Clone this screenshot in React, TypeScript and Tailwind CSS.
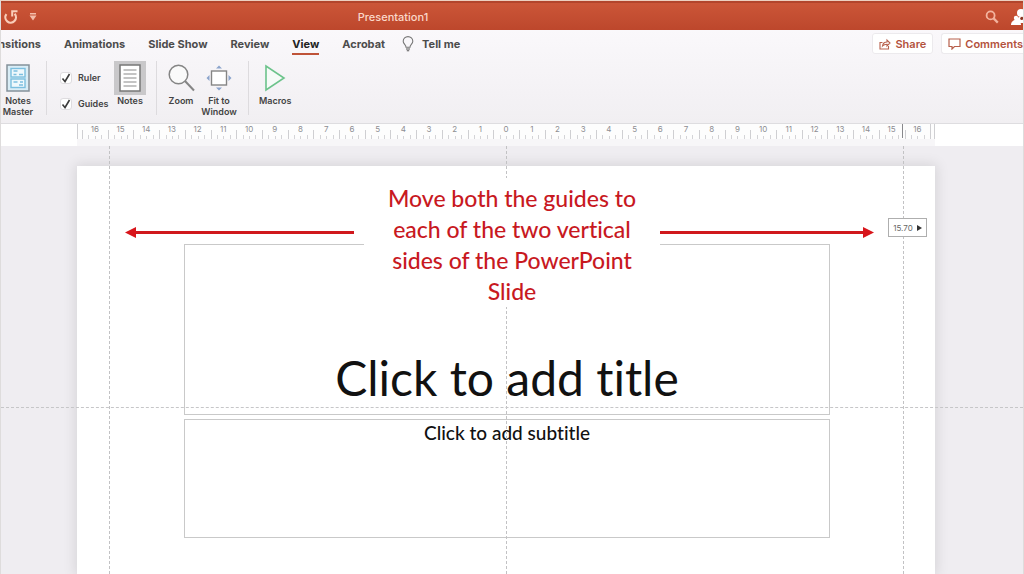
import type { ReactNode } from "react";
import clsx from "clsx";

const tabs = ["Animations", "Slide Show", "Review", "View", "Acrobat"];
const rulerMarks = Array.from({ length: 33 }, (_, i) => Math.abs(i - 16));

const UndoIcon = () => (
  <svg width="16" height="16" viewBox="0 0 16 16" fill="none" stroke="#f9cdb9" strokeWidth="2.2">
    <path d="M3.400 5.200A5.300 5.300 0 1 0 11.600 4.800" />
    <path d="M14.500 2.200H9.200v5.300" strokeWidth="2" />
  </svg>
);

const SearchIcon = () => (
  <svg width="14" height="14" viewBox="0 0 14 14" fill="none" stroke="#f3b49f" strokeWidth="1.8">
    <circle cx="5.6" cy="5.4" r="4" />
    <path d="m8.6 8.4 4.2 4.2" strokeWidth="2.2" />
  </svg>
);

const PeopleIcon = () => (
  <svg width="20" height="18" viewBox="0 0 20 18" fill="#fff">
    <circle cx="10" cy="5" r="4" />
    <path d="M3 15c0-4 3-6 7-6s7 2 7 6z" />
    <circle cx="5" cy="10" r="2.2" />
    <path d="M0 17c0-3 2-5 5-5s5 2 5 5z" />
    <circle cx="10.8" cy="10.4" r="1.6" fill="#8c3420" />
  </svg>
);

const BulbIcon = () => (
  <svg width="12" height="16" viewBox="0 0 12 16" fill="none" stroke="#777" strokeWidth="1.1">
    <path d="M4 11.2C4 8.8 1.2 8 1.2 5.2a4.8 4.6 0 0 1 9.6 0C10.8 8 8 8.8 8 11.2z" />
    <path d="M4 13h4M4.8 14.8h2.4" stroke="#555" />
  </svg>
);

const ShareIcon = () => (
  <svg width="12" height="12" viewBox="0 0 12 12" fill="none" stroke="#b8604c" strokeWidth="1.1">
    <path d="M3.500 4.500H1v6.500h8.500V8" />
    <path d="M3.500 8c.4-2.800 2-4 4.500-4V2l3 3-3 3V6.200C6 6.200 4.700 6.600 3.500 8z" />
  </svg>
);

const CommentIcon = () => (
  <svg width="13" height="12" viewBox="0 0 13 12" fill="none" stroke="#b8604c" strokeWidth="1.2">
    <path d="M1 1h11v7.500H6.500L4 11V8.500H1z" />
  </svg>
);

const NotesMasterIcon = () => (
  <svg width="24" height="28" viewBox="0 0 24 28" fill="none">
    <rect x="1" y="1" width="22" height="26" fill="#d9edf6" stroke="#84919a" strokeWidth="1.500" />
    <rect x="5" y="4.500" width="14" height="8.500" fill="#eef8fc" stroke="#7cbfdf" strokeWidth="1.400" />
    <rect x="5" y="15" width="14" height="8.500" fill="#eef8fc" stroke="#7cbfdf" strokeWidth="1.400" />
    <path d="M7.500 7h4M13 10.500h4M7.500 10.500h3M7.500 18h4M13 21h4M14 18h3" stroke="#7cbfdf" strokeWidth="1.600" />
  </svg>
);

const NotesIcon = () => (
  <svg width="22" height="28" viewBox="0 0 22 28" fill="none">
    <rect x="1" y="1" width="20" height="26" fill="#fff" stroke="#777" strokeWidth="1.500" />
    <path d="M4.500 6h13M4.500 10h13M4.500 14h13M4.500 18h13M4.500 22h13" stroke="#8a8a8a" strokeWidth="1.200" />
  </svg>
);

const ZoomIcon = () => (
  <svg width="28" height="28" viewBox="0 0 28 28" fill="none" stroke="#858585" strokeWidth="1.500">
    <circle cx="11.500" cy="10.500" r="9.300" fill="#fafafa" />
    <path d="m18 17 9 9.500" strokeWidth="2" />
  </svg>
);

const FitIcon = () => (
  <svg width="26" height="26" viewBox="0 0 26 26" fill="none">
    <rect x="5.500" y="6" width="15" height="14" fill="#fff" stroke="#858585" strokeWidth="1.400" />
    <path d="m13 .5 3 3h-6zM13 25.500l3-3h-6zM.5 13l3-3v6zM25.500 13l-3-3v6z" fill="#8ba4cc" />
  </svg>
);

const MacrosIcon = () => (
  <svg width="22" height="28" viewBox="0 0 22 28" fill="none" stroke="#6cc38b" strokeWidth="1.600">
    <path d="M2 2v24l18-12z" fill="#f6fbf8" />
  </svg>
);

const RibbonButton = ({
  icon,
  label,
  active,
  className,
}: {
  icon: ReactNode;
  label: string;
  active?: boolean;
  className?: string;
}) => (
  <button type="button" className={clsx("flex shrink-0 flex-col items-center", className)}>
    <span className={clsx("flex h-[34px] w-8 items-center justify-center", active && "bg-[#c9c8ca]")}>
      {icon}
    </span>
    <span className="text-[9px] leading-[11px] font-semibold">{label}</span>
  </button>
);

const CheckOption = ({ id, label }: { id: string; label: string }) => (
  <label htmlFor={id} className="flex items-center gap-[6px] text-[9px] leading-3 font-semibold">
    <span className="grid h-3 w-3 place-items-center">
      <input
        id={id}
        type="checkbox"
        defaultChecked
        className="col-start-1 row-start-1 h-3 w-3 appearance-none rounded-[3px] border border-[#dedcdf] bg-white"
      />
      <svg
        width="10"
        height="10"
        viewBox="0 0 10 10"
        fill="none"
        stroke="#3c3c3c"
        strokeWidth="1.600"
        className="pointer-events-none col-start-1 row-start-1"
      >
        <path d="m1.500 5.500 2.500 3L8.500 1" />
      </svg>
    </span>
    {label}
  </label>
);

const Divider = () => <div className="h-[54px] w-px shrink-0 bg-[#dddbde]" />;

const TitleBar = () => (
  <header className="grid h-[29px] grid-cols-[1fr_auto_1fr] items-center border-t-2 border-[#b2452c] bg-linear-to-b from-[#cb5638] to-[#bd472c] pr-[238px]">
    <div className="flex items-center gap-[10px] pl-[2px]">
      <button type="button" aria-label="Undo">
        <UndoIcon />
      </button>
      <button type="button" aria-label="Customize toolbar">
        <svg width="8" height="8" viewBox="0 0 8 8" fill="#f3bda9">
          <path d="M1 0h6v1.500H1zM.5 2.500h7L4 7.500z" />
        </svg>
      </button>
    </div>
    <h1 className="text-[11px] leading-4 font-medium text-[#fbd8ca]">Presentation1</h1>
    <div className="-mr-[238px] flex items-center justify-end gap-[12px] overflow-hidden">
      <button type="button" aria-label="Search">
        <SearchIcon />
      </button>
      <button type="button" aria-label="Account" className="-mr-2">
        <PeopleIcon />
      </button>
    </div>
  </header>
);

const TabBar = () => (
  <div className="flex h-[27px] items-center justify-between text-[11px] leading-4 font-bold">
    <nav className="flex items-center gap-[23px] text-[#4c4c4c]">
      <a href="#transitions" className="flex w-10 justify-end overflow-hidden">
        Transitions
      </a>
      {tabs.map((tab) => (
        <a
          key={tab}
          href={`#${tab}`}
          className={clsx(
            "border-y-2 border-transparent py-px",
            tab === "View" && "border-b-[#bf5338] text-[#222]",
          )}
        >
          {tab}
        </a>
      ))}
      <a href="#tell-me" className="-ml-[6px] flex items-center gap-2">
        <BulbIcon />
        Tell me
      </a>
    </nav>
    <div className="flex h-[21px] gap-2 overflow-hidden font-semibold text-[#b3523d]">
      <button type="button" className="flex items-center gap-1 rounded-[3px] border border-[#eceaed] bg-white px-[6px]">
        <ShareIcon />
        Share
      </button>
      <button type="button" className="flex items-center gap-1 rounded-l-[3px] border border-r-0 border-[#eceaed] bg-white pl-[6px]">
        <CommentIcon />
        Comments
      </button>
    </div>
  </div>
);

const Ribbon = () => (
  <div className="flex h-[66px] items-start pt-1">
    <RibbonButton icon={<NotesMasterIcon />} label="Notes Master" className="w-[34px]" />
    <div className="ml-[11px] flex">
      <Divider />
      <div className="mr-[5px] ml-[13px] flex w-[49px] flex-col gap-[14px] pt-[11px]">
        <CheckOption id="ruler" label="Ruler" />
        <CheckOption id="guides" label="Guides" />
      </div>
      <RibbonButton icon={<NotesIcon />} label="Notes" active />
    </div>
    <div className="ml-[10px] flex">
      <Divider />
      <RibbonButton icon={<ZoomIcon />} label="Zoom" className="ml-2 w-8" />
      <RibbonButton icon={<FitIcon />} label="Fit to Window" className="ml-[2px] w-10" />
    </div>
    <div className="ml-[9px] flex">
      <Divider />
      <RibbonButton icon={<MacrosIcon />} label="Macros" className="ml-[10px]" />
    </div>
  </div>
);

const Ruler = () => (
  <div className="relative h-[23px] border-t border-[#dedde0] bg-white pr-[88px] pl-[76px]">
    <div className="flex h-full border-b-[7px] border-[#f7f6f8] bg-[#fdfdfd]">
      <div className="h-[15px] w-[5px] border-l border-[#cfcfd2]" />
      {rulerMarks.map((mark, i) => (
        <div key={i} className="grid h-[15px] flex-1">
          <span className="col-start-1 row-start-1 text-center text-[8px] leading-[11px] text-[#8d8d92]">
            {mark}
          </span>
          <div className="col-start-1 row-start-1 grid grid-cols-4 items-end">
            <i className="h-[9px] border-l border-[#cfcfd2]" />
            <i className="h-1 border-l border-[#d4d4d7]" />
            <i className="h-[3px] border-l border-[#d4d4d7]" />
            <i className="h-1 border-l border-[#d4d4d7]" />
          </div>
        </div>
      ))}
      <div className="h-[15px] w-[5px] border-x border-[#cfcfd2]" />
    </div>
    <div className="absolute top-0 right-[120px] h-[14px] w-px bg-[#88888c]" />
  </div>
);

const Callout = () => (
  <div className="absolute top-3 right-[61px] left-12 flex">
    <div className="mt-[48px] mr-[10px] flex h-3 flex-[229] items-center">
      <svg width="11" height="11" viewBox="0 0 11 11" fill="#d8151b">
        <path d="M0 5.500 11 0v11z" />
      </svg>
      <div className="h-[3px] flex-1 bg-[#d0181d]" />
    </div>
    <p className="w-[296px] shrink-0 bg-white px-4 pt-[5px] text-center text-[23px] leading-[31px] font-medium text-[#c8191f]">
      Move both the guides to each of the two vertical sides of the PowerPoint Slide
    </p>
    <div className="mt-[48px] flex h-3 flex-[214] items-center">
      <div className="h-[3px] flex-1 bg-[#d0181d]" />
      <svg width="11" height="11" viewBox="0 0 11 11" fill="#d8151b">
        <path d="M11 5.500 0 0v11z" />
      </svg>
    </div>
  </div>
);

const App = () => {
  return (
    <div className="flex min-h-screen flex-col overflow-hidden border border-[#dedcdc] border-t-[#ecd0c0] font-['Inter',sans-serif] text-[#444]">
      <TitleBar />
      <div className="bg-linear-to-b from-[#faf8fb] to-[#f1eff2]">
        <TabBar />
        <Ribbon />
      </div>
      <Ruler />
      <main className="relative flex flex-1 flex-col bg-[#efedf1] pt-[20px] pr-[88px] pl-[76px]">
        <div className="relative flex-1 bg-white pt-[78px] pr-[105px] pb-9 pl-[107px] font-['Lato','Open_Sans',sans-serif] text-[#111] [font-variant-ligatures:none] shadow-[0_0_12px_2px_rgba(0,0,0,0.1)]">
          <h2 className="flex h-[171px] items-end justify-center border border-[#c9c9c9] pb-2 text-[48px] leading-[56px]">
            Click to add title
          </h2>
          <p className="mt-1 h-[119px] border border-[#c9c9c9] pt-px text-center text-[19px] leading-6 font-medium">
            Click to add subtitle
          </p>
          <div className="absolute -top-5 bottom-0 left-8 border-l border-dashed border-[#c2c2c4]" />
          <div className="absolute -top-5 bottom-0 left-1/2 border-l border-dashed border-[#c2c2c4]" />
          <div className="absolute -top-5 right-[31px] bottom-0 border-l border-dashed border-[#c2c2c4]" />
          <Callout />
          <div className="absolute top-[52px] right-2 flex h-[19px] w-[39px] items-center justify-center gap-1 border border-[#aeaeae] bg-white font-['Inter',sans-serif] text-[8px] text-[#666]">
            15.70
            <svg width="5" height="6" viewBox="0 0 5 6" fill="#333">
              <path d="M0 0v6l5-3z" />
            </svg>
          </div>
        </div>
        <div className="absolute inset-x-0 top-[261px] border-t border-dashed border-[#c6c6c8]" />
      </main>
    </div>
  );
};

export default App;
